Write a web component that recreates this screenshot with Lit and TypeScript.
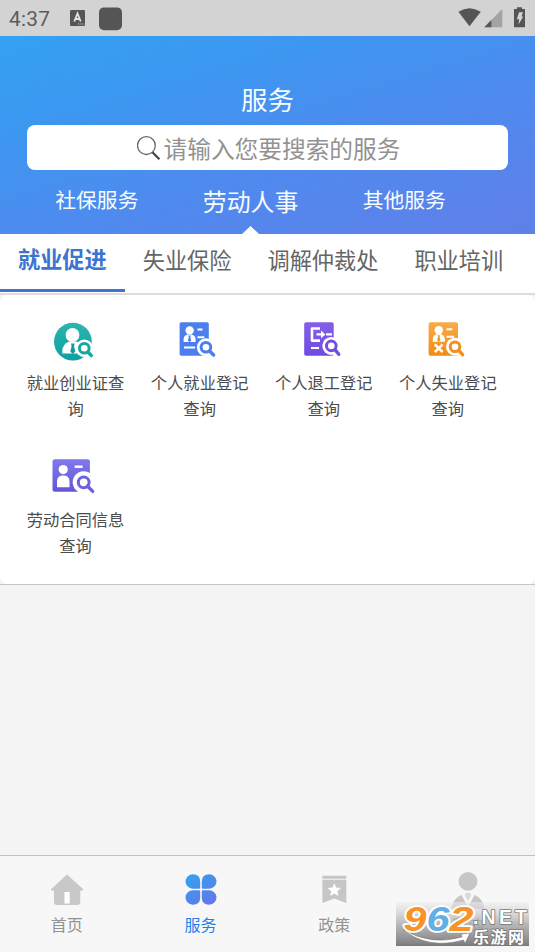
import { LitElement, html, svg, css } from "lit";
import { customElement, property } from "lit/decorators.js";

const lens = (x: number, y: number, ex: number, ey: number, color: string, r = 4.8, halo = 9) => svg`
  <circle cx=${x} cy=${y} r=${halo} fill="#fff"/>
  <path d="M${x + 4} ${y + 4}L${ex} ${ey}" stroke="#fff" stroke-width="5"/>
  <circle cx=${x} cy=${y} r=${r} fill="#fff" stroke=${color} stroke-width="3"/>
  <path d="M${x + 3.7} ${y + 3.7}L${ex - 1} ${ey - 1}" stroke=${color} stroke-width="3.4" stroke-linecap="round"/>`;

const gradient = (id: string, from: string, to: string) => svg`
  <linearGradient id=${id} x1="0" y1="0" x2="0" y2="1">
    <stop offset="0" stop-color=${from}/><stop offset="1" stop-color=${to}/>
  </linearGradient>`;

const person = (x: number, y: number, color: string) => svg`
  <g transform="translate(${x} ${y})">
    <circle cx="0" cy="-4" r="4.2" fill="#fff"/>
    <path d="M-6 7.6V5.2Q-6 1.2-2.2 .1H2.2Q6 1.2 6 5.2V7.6Z" fill="#fff"/>
    <path d="M-1.2 1H1.2L.8 2.8 1.7 6 0 7.8-1.7 6-.8 2.8Z" fill=${color}/>
  </g>`;

const serviceIcons: Record<string, unknown> = {
  certificate: svg`
    <defs>${gradient("g", "#2bb5ae", "#0e9f9f")}</defs>
    <circle cx="20.9" cy="24.7" r="18.9" fill="url(#g)"/>
    <circle cx="20.5" cy="18" r="6.9" fill="#fff"/>
    <path d="M10.3 36.6V34Q10.3 27.5 17 24.5H24Q29 26.5 30 30V36.6Z" fill="#fff"/>
    <path d="M19 26.5H22.6L22 29.3 23.3 34.5 20.8 37 18.3 34.5 19.6 29.3Z" fill="#119b9a"/>
    ${lens(32.3, 31.3, 40.3, 39.6, "#18a7a5", 4.8, 8.8)}`,
  employment: svg`
    <rect x="3.6" y="5.2" width="29.2" height="33.6" rx="1.8" fill="#4c7eee"/>
    ${person(13.6, 17.4, "#4c7eee")}
    <path d="M21.5 12.6H26.5M21.5 20.3H28.3M8 30.6H19" stroke="#fff" stroke-width="2"/>
    ${lens(29.9, 30.3, 38.6, 39, "#4c7eee")}`,
  resignation: svg`
    <defs>${gradient("g", "#8560e5", "#704be0")}</defs>
    <rect x="4.2" y="5.2" width="29.5" height="33.6" rx="1.8" fill="url(#g)"/>
    <path d="M20 11.5H12V23.6H20" fill="none" stroke="#fff" stroke-width="2.6" stroke-linejoin="round"/>
    <path d="M16.5 17.4H24M26 17.4H32M11 31H19" fill="none" stroke="#fff" stroke-width="2.1"/>
    <path d="M21 13.6L25.4 17.4L21 21.2Z" fill="#fff"/>
    ${lens(31.3, 28.9, 39.7, 38.3, "#744de0")}`,
  unemployment: svg`
    <defs>${gradient("g", "#f8ac48", "#f08b18")}</defs>
    <rect x="4.6" y="5.2" width="29.4" height="33.6" rx="1.8" fill="url(#g)"/>
    ${person(14.8, 17.2, "#f29627")}
    <path d="M22.5 12.3H28.3M22.5 19.8H30" stroke="#fff" stroke-width="2"/>
    <path d="M10.8 27.4L18.6 35.2M18.6 27.4L10.8 35.2" stroke="#fff" stroke-width="2.6"/>
    ${lens(31, 29.7, 39.6, 38.7, "#f0901f")}`,
  contract: svg`
    <defs>${gradient("g", "#8178ee", "#6257d5")}</defs>
    <rect x=".5" y="5.3" width="37.4" height="32.4" rx="2.2" fill="url(#g)"/>
    <circle cx="11.2" cy="15.6" r="4.6" fill="#fff"/>
    <path d="M5 33.3V27.3Q5 21.6 11.2 21.6T17.5 27.3V33.3Z" fill="#fff"/>
    <path d="M22.6 12.7H30.6" stroke="#fff" stroke-width="2.4"/>
    ${lens(31.7, 28.3, 41.7, 38.4, "#6c61df", 5.4, 11)}`,
};

const navIcons: Record<string, unknown> = {
  home: svg`
    <path d="M18 2.5L34.3 17.3Q34.3 19.3 31.3 18.5V30Q31.3 33 28.3 33H8Q5 33 5 30V18.5Q2 19.3 2 17.3Z" fill="#c8c8c8"/>
    <rect x="15.5" y="20" width="5.2" height="11.5" fill="#fff"/>`,
  service: svg`
    <defs><linearGradient id="s" gradientUnits="userSpaceOnUse" x1="8" y1="3" x2="25" y2="33">
      <stop offset="0" stop-color="#35a0ef"/><stop offset="1" stop-color="#6278e9"/>
    </linearGradient></defs>
    <path transform="translate(0 -.5)" fill="url(#s)" d="M9.7 2.8Q17.2 2.8 17.2 10V16Q17.2 17.2 16 17.2H9.7A7.2 7.2 0 0 1 9.7 2.8ZM26.3 2.8Q18.8 2.8 18.8 10V16Q18.8 17.2 20 17.2H26.3A7.2 7.2 0 0 0 26.3 2.8ZM9.7 33.2Q17.2 33.2 17.2 26V20Q17.2 18.8 16 18.8H9.7A7.2 7.2 0 0 0 9.7 33.2ZM26.3 33.2Q18.8 33.2 18.8 26V20Q18.8 18.8 20 18.8H26.3A7.2 7.2 0 0 1 26.3 33.2Z"/>`,
  policy: svg`
    <path d="M6.4 3.7H30.3V6.7H6.4ZM6.4 7.8H30.3V31L18.3 26.5 6.4 31Z" fill="#c6c6c6"/>
    <path d="M18.3 11.2L20.2 15.6 25 16.1 21.4 19.3 22.4 24 18.3 21.6 14.2 24 15.2 19.3 11.6 16.1 16.4 15.6Z" fill="#fff"/>`,
  mine: svg`
    <circle cx="18" cy="9.4" r="9.4" fill="#c6c6c6"/>
    <path d="M1.5 37Q2 28 11.2 22.7L17 33 16 37ZM34.5 37Q34 28 24.8 22.7L19 33 20 37Z" fill="#c6c6c6"/>
    <path d="M15.5 20.8H20.5L21 24 18 29 15 24Z" fill="#dadada"/>`,
};

@customElement("glyph-icon")
class GlyphIcon extends LitElement {
  @property() name = "";
  @property({ type: Boolean }) nav = false;
  static styles = css`
    :host { display: block; }
    svg { display: block; overflow: visible; }
  `;
  render() {
    const size = this.nav ? 36 : 48;
    return html`<svg width=${size} height=${size} viewBox="0 0 ${size} ${size}">
      ${this.nav ? navIcons[this.name] : serviceIcons[this.name]}
    </svg>`;
  }
}

@customElement("app-root")
class AppRoot extends LitElement {
  static styles = css`
    :host {
      display: flex; flex-direction: column; position: relative; height: 952px; overflow: hidden;
      background: #f4f4f4; color: #4c4c4c;
      font-family: "Noto Sans CJK SC", sans-serif;
    }
    * { box-sizing: border-box; }
    .status {
      flex: none; height: 36px; background: #d3d3d3; display: flex; align-items: center;
      padding: 1px 9px 0; color: #5c5c5c;
    }
    .time { font: 20.8px/36px Roboto, sans-serif; width: 61px; letter-spacing: .3px; }
    .status svg { display: block; }
    .status-right { margin-left: auto; }
    .header {
      flex: none; height: 198px;
      background: linear-gradient(163deg, #34a1f2 0%, #3b98f0 25%, #4f8aee 60%, #607fe9 100%);
      color: #f7fcff; padding-top: 45px;
    }
    .title { text-align: center; font-size: 26.5px; line-height: 36px; height: 44px; }
    .search {
      margin: 0 27px; height: 45px; border-radius: 8px; background: #fff; color: #929292;
      display: flex; justify-content: center; align-items: center; padding-left: 2px;
      font-size: 23.7px; line-height: 46px;
    }
    .search svg { width: 27px; height: 27px; flex: none; margin-top: 2px; }
    .search span { height: 45px; line-height: 47px; }
    .tabs { display: flex; height: 64px; padding-left: 20px; }
    .tab { width: 153.7px; text-align: center; font-size: 20.8px; line-height: 59px; white-space: nowrap; }
    .tab.active { font-size: 23.9px; line-height: 62px; display: flex; flex-direction: column; align-items: center; }
    .tab.active::after {
      content: ""; flex: none; margin-top: -6px; width: 17px; height: 8px;
      background: #fff; clip-path: polygon(50% 0, 100% 100%, 0 100%);
    }
    .subtabs {
      flex: none; height: 61px; display: flex; background: #fff; color: #656565;
      border-bottom: 2px solid #dddddf; font-size: 22.2px; line-height: 51.5px;
    }
    .subtab { padding: 0 18px; height: 57.5px; white-space: nowrap; }
    .subtab.active { color: #3c74d0; font-weight: 700; line-height: 49px; border-bottom: 3px solid #3c74d0; }
    .panel {
      flex: none; height: 289px; background: #fff; border-radius: 8px;
      display: grid; grid-template-columns: repeat(4, 124.1px); grid-auto-rows: 136.5px;
      padding: 22px 0 0 13.5px;
    }
    .panel-wrap { flex: none; background: #f4f4f4; border-bottom: 1px solid #c5c6cc; }
    .service { display: flex; flex-direction: column; align-items: center; }
    .label { margin-top: 4px; width: 98px; text-align: center; font-size: 16.3px; line-height: 26px; }
    .nav {
      flex: none; margin-top: auto; height: 97px; background: #f7f7f7; border-top: 1px solid #c1c1c1;
      display: grid; grid-template-columns: repeat(4, 1fr);
    }
    .nav-item {
      display: flex; flex-direction: column; align-items: center; padding-top: 16px;
      color: #929292; font-size: 16px; line-height: 24px; gap: 4px;
    }
    .nav-item.active { color: #2180eb; }
    .watermark { position: absolute; left: 396px; top: 902px; width: 133px; height: 44px; display: block; overflow: visible; }
    .wm-num { font: italic 700 35px "Liberation Sans", sans-serif; }
    .wm-net { font: 700 19.5px "Liberation Sans", sans-serif; }
    .wm-cn { font: 700 16px "Noto Sans CJK SC", sans-serif; }
  `;

  private tabs = ["社保服务", "劳动人事", "其他服务"];
  private subtabs = ["就业促进", "失业保险", "调解仲裁处", "职业培训"];
  private services = [
    ["certificate", "就业创业证查询"],
    ["employment", "个人就业登记查询"],
    ["resignation", "个人退工登记查询"],
    ["unemployment", "个人失业登记查询"],
    ["contract", "劳动合同信息查询"],
  ];
  private nav = [["home", "首页"], ["service", "服务"], ["policy", "政策"], ["mine", "我的"]];

  render() {
    return html`
      <div class="status">
        <span class="time">4:37</span>
        <svg width="54" height="24" viewBox="0 0 54 24">
          <rect x="0" y="3" width="15" height="16" rx="1.3" fill="#555"/>
          <path d="M4.3 14.5L7.5 6.5L10.7 14.5M5.4 12H9.6" fill="none" stroke="#e2e2e2" stroke-width="1.8"/>
          <path d="M8 17H14" stroke="#ccc" stroke-width="1" stroke-dasharray="1.2 1"/>
          <rect x="29" y=".4" width="23" height="22.8" rx="5" fill="#555"/>
        </svg>
        <svg class="status-right" width="68" height="24" viewBox="458 0 68 24">
          <path d="M458.4 4.7Q469.5-2.4 480.8 4.7L469.5 19.3Z" fill="#555"/>
          <path d="M502.3 2V20.2H484.3Z" fill="#a3a3a3"/><path d="M491.3 13V20.2H484.3Z" fill="#555"/>
          <path d="M517 .2H522V2H525V20.2H514V2H517Z" fill="#555"/>
          <path d="M519 5.3H523L521.5 9.5H523.3L518.5 17.5L519.2 12.3H516.8Z" fill="#d3d3d3"/>
        </svg>
      </div>
      <div class="header">
        <div class="title">服务</div>
        <div class="search">
          <svg viewBox="0 0 27 27" fill="none" stroke="#666">
            <circle cx="9.4" cy="10.6" r="8.9" stroke-width="1.3"/>
            <path d="M15.4 17.3L22.4 24.2" stroke="#444" stroke-width="2.2"/>
          </svg>
          <span>请输入您要搜索的服务</span>
        </div>
        <div class="tabs">
          ${this.tabs.map((t, i) => html`<div class="tab ${i === 1 ? "active" : ""}">${t}</div>`)}
        </div>
      </div>
      <div class="subtabs">
        ${this.subtabs.map((t, i) => html`<div class="subtab ${i === 0 ? "active" : ""}">${t}</div>`)}
      </div>
      <div class="panel-wrap"><div class="panel">
        ${this.services.map(([icon, label]) => html`
          <div class="service"><glyph-icon name=${icon}></glyph-icon><div class="label">${label}</div></div>`)}
      </div></div>
      <div class="nav">
        ${this.nav.map(([icon, label], i) => html`
          <div class="nav-item ${i === 1 ? "active" : ""}"><glyph-icon nav name=${icon}></glyph-icon><span>${label}</span></div>`)}
      </div>
      <svg class="watermark" viewBox="0 0 133 44">
        <defs>
          <linearGradient id="w" x1="0" y1="0" x2="0" y2="1">
            <stop offset="0" stop-color="#eee" stop-opacity=".55"/>
            <stop offset=".5" stop-color="#a8a8a8" stop-opacity=".8"/>
            <stop offset="1" stop-color="#7b7b7b"/>
          </linearGradient>
        </defs>
        <rect width="133" height="44" fill="url(#w)"/>
        <path d="M7 27.5Q35 44 66 35L65 32L74 31L69 41.5L67.5 38Q32 48 7 27.5Z" fill="#fff" stroke="#777" stroke-width=".6"/>
        <g class="wm-num" stroke-linejoin="round" stroke="#fff" stroke-width="3.6" paint-order="stroke">
          <text x="7.5" y="28.5" textLength="23" lengthAdjust="spacingAndGlyphs" fill="#f79327">9</text>
          <text x="30.5" y="28.5" textLength="23" lengthAdjust="spacingAndGlyphs" fill="#62afe3">6</text>
          <text x="53.5" y="28.5" textLength="24" lengthAdjust="spacingAndGlyphs" fill="#f79327">2</text>
        </g>
        <g fill="#fff" stroke="#777" stroke-width="1.6" paint-order="stroke" stroke-linejoin="round">
          <text class="wm-net" x="77" y="21.8" textLength="54" lengthAdjust="spacing">.NET</text>
          <text class="wm-cn" x="77" y="40.5" textLength="51">乐游网</text>
        </g>
      </svg>
    `;
  }
}
